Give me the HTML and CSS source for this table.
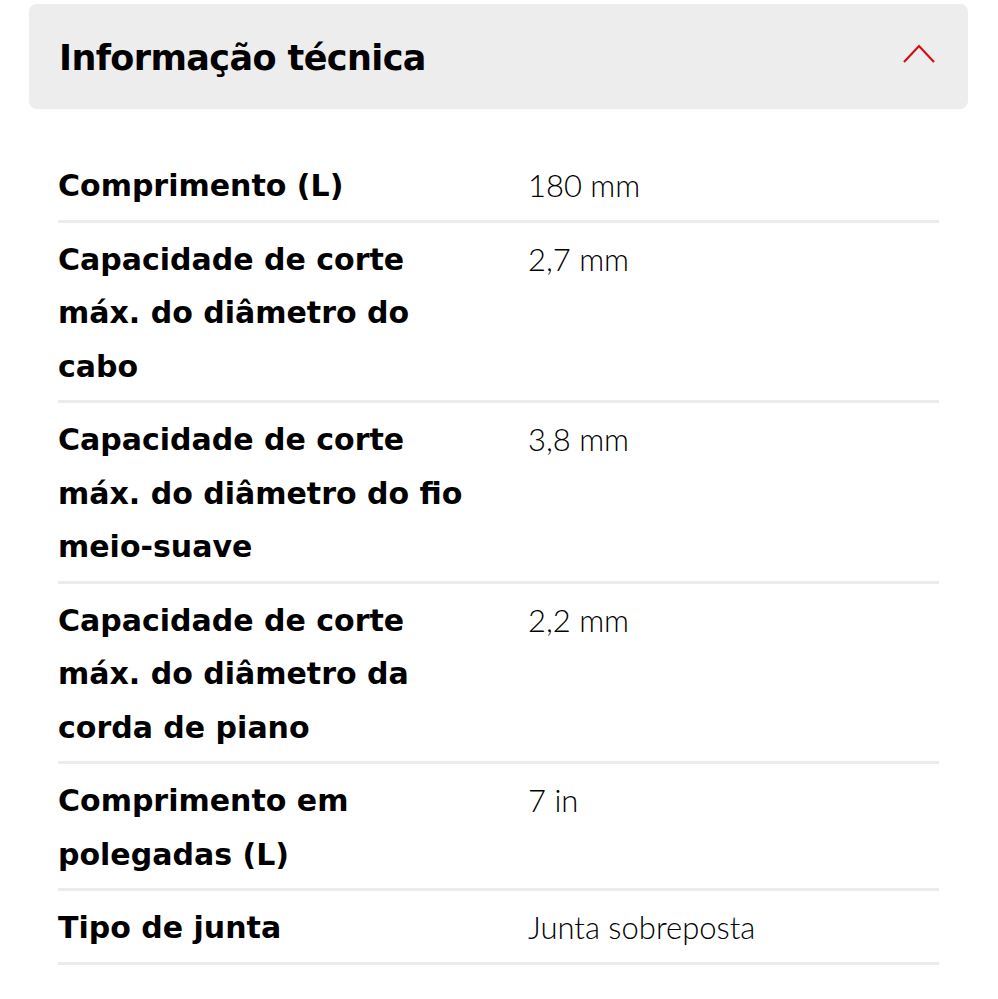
FILE: index.html
```html
<!DOCTYPE html>
<html lang="pt">
<head>
<meta charset="utf-8">
<title>Informação técnica</title>
<link rel="stylesheet" href="styles.css">
</head>
<body>
<section class="accordion">
  <div class="acc-head">
    <h2 class="acc-title">Informação técnica</h2>
    <svg class="chev" width="32" height="20" viewBox="0 0 32 20"><path d="M1 18 L16 2 L31 18" fill="none" stroke="#d40f14" stroke-width="2.2"/></svg>
  </div>
  <div class="specs">
    <div class="row"><div class="label">Comprimento (L)</div><div class="value">180 mm</div></div>
    <div class="row"><div class="label">Capacidade de corte máx. do diâmetro do cabo</div><div class="value">2,7 mm</div></div>
    <div class="row"><div class="label">Capacidade de corte máx. do diâmetro do fio meio-suave</div><div class="value">3,8 mm</div></div>
    <div class="row"><div class="label">Capacidade de corte máx. do diâmetro da corda de piano</div><div class="value">2,2 mm</div></div>
    <div class="row"><div class="label">Comprimento em polegadas (L)</div><div class="value">7 in</div></div>
    <div class="row"><div class="label">Tipo de junta</div><div class="value">Junta sobreposta</div></div>
  </div>
</section>
</body>
</html>
```
FILE: styles.css
```css
* { box-sizing: border-box; }
body {
  margin: 0;
  background: #fff;
  color: #000;
  font-family: "DejaVu Sans", sans-serif;
}
.accordion { padding: 4px 30px 0 29px; }
.acc-head {
  display: flex;
  align-items: center;
  justify-content: space-between;
  height: 105px;
  background: #ededed;
  border-radius: 8px;
  padding: 0 33px 0 30px;
}
.acc-title {
  margin: 0;
  margin-top: 2px;
  font-size: 35px;
  font-weight: 700;
  letter-spacing: -0.6px;
}
.chev { display: block; margin-top: -6px; }
.specs {
  margin: 40px 29px 0 29px;
}
.row {
  display: flex;
  border-bottom: 3px solid #ececec;
  padding: 10px 0 7px;
  line-height: 53.5px;
}
.label {
  flex: 0 0 470px;
  padding-right: 45px;
  font-size: 30px;
  font-weight: 700;
}
.value {
  font-family: "Lato", "DejaVu Sans", sans-serif;
  font-size: 31px;
  font-weight: 300;
}
```
